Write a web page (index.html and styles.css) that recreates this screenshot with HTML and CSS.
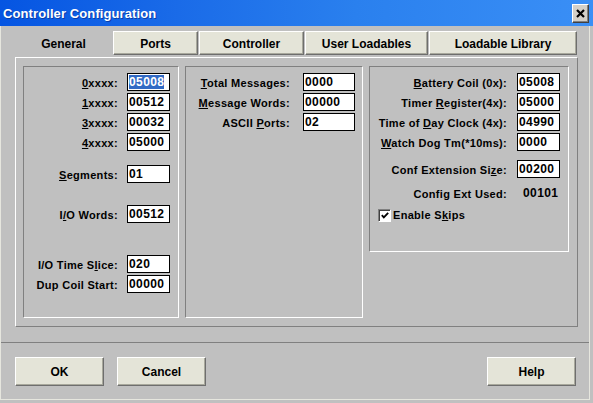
FILE: index.html
```html
<!DOCTYPE html>
<html>
<head>
<meta charset="utf-8">
<link rel="stylesheet" href="styles.css">
</head>
<body>
<div class="window">
  <div class="titlebar">
    <span class="title">Controller Configuration</span>
    <span class="close"><svg width="9" height="9" viewBox="0 0 9 9"><path d="M1 1 L8 8 M8 1 L1 8" stroke="#000" stroke-width="2.2"/></svg></span>
  </div>
  <div class="client">
    <div class="tabs">
      <div class="tab tab-active w-general">General</div>
      <div class="tab w-ports">Ports</div>
      <div class="tab w-controller">Controller</div>
      <div class="tab w-user">User Loadables</div>
      <div class="tab w-library">Loadable Library</div>
    </div>
    <div class="panel">
      <div class="group g-left">
        <div class="row"><span class="lbl"><u>0</u>xxxx:</span><span class="inp"><span class="sel">05008</span></span></div>
        <div class="row"><span class="lbl"><u>1</u>xxxx:</span><span class="inp">00512</span></div>
        <div class="row"><span class="lbl"><u>3</u>xxxx:</span><span class="inp">00032</span></div>
        <div class="row"><span class="lbl"><u>4</u>xxxx:</span><span class="inp">05000</span></div>
        <div class="row m14"><span class="lbl"><u>S</u>egments:</span><span class="inp">01</span></div>
        <div class="row m22"><span class="lbl">I<u>/</u>O Words:</span><span class="inp">00512</span></div>
        <div class="row m32"><span class="lbl">I/O Time S<u>l</u>ice:</span><span class="inp">020</span></div>
        <div class="row"><span class="lbl">Dup Coil Start:</span><span class="inp">00000</span></div>
      </div>
      <div class="group g-mid">
        <div class="row"><span class="lbl"><u>T</u>otal Messages:</span><span class="inp">0000</span></div>
        <div class="row"><span class="lbl"><u>M</u>essage Words:</span><span class="inp">00000</span></div>
        <div class="row"><span class="lbl">ASCII <u>P</u>orts:</span><span class="inp">02</span></div>
      </div>
      <div class="group g-right">
        <div class="row"><span class="lbl"><u>B</u>attery Coil (0x):</span><span class="inp">05008</span></div>
        <div class="row"><span class="lbl">Timer <u>R</u>egister(4x):</span><span class="inp">05000</span></div>
        <div class="row"><span class="lbl">Time of <u>D</u>ay Clock (4x):</span><span class="inp">04990</span></div>
        <div class="row"><span class="lbl"><u>W</u>atch Dog Tm(*10ms):</span><span class="inp">0000</span></div>
        <div class="row m9"><span class="lbl">Conf Extension Si<u>z</u>e:</span><span class="inp">00200</span></div>
        <div class="row m6"><span class="lbl">Config Ext Used:</span><span class="val">00101</span></div>
        <div class="row m4 chkrow">
          <span class="chk"><svg width="11" height="11" viewBox="0 0 11 11"><path d="M2 5 L4.2 7.5 L9 2.5" fill="none" stroke="#000" stroke-width="2"/></svg></span>
          <span class="chklbl">Enable S<u>k</u>ips</span>
        </div>
      </div>
    </div>
    <div class="sep"></div>
    <div class="buttons">
      <div class="btn">OK</div>
      <div class="btn">Cancel</div>
      <div class="spacer"></div>
      <div class="btn">Help</div>
    </div>
  </div>
</div>
</body>
</html>
```
FILE: styles.css
```css
html, body {
  margin: 0;
  padding: 0;
  background: #c0c0c0;
}
.window {
  width: 593px;
  height: 403px;
  background: #c0c0c0;
  font-family: "Liberation Sans", Arial, sans-serif;
  font-weight: bold;
  color: #000;
  display: flex;
  flex-direction: column;
  overflow: hidden;
}
.titlebar {
  height: 26px;
  flex: none;
  display: flex;
  align-items: center;
  justify-content: space-between;
  background: linear-gradient(to right, #0555e2 0%, #1a6be8 30%, #2a80ee 60%, #3a8ff6 100%);
  padding: 0 4px 0 3px;
}
.title {
  color: #fff;
  font-size: 13px;
  font-weight: bold;
  letter-spacing: 0.1px;
  text-shadow: 1px 1px 0 #0b3ea8;
}
.close {
  width: 17px;
  height: 19px;
  box-sizing: border-box;
  background: #d4d0c8;
  border: 1px solid;
  border-color: #fff #404040 #404040 #fff;
  box-shadow: inset -1px -1px #808080;
  display: flex;
  align-items: center;
  justify-content: center;
  margin-top: 1px;
}
.client {
  flex: 1;
  border-left: 1px solid #e6e6de;
  border-right: 1px solid #e6e6de;
  border-bottom: 1px solid #e6e6de;
  margin-right: 3px;
  margin-bottom: 3px;
  display: flex;
  flex-direction: column;
}
.tabs {
  display: flex;
  gap: 1px;
  margin: 5px 0 0 14px;
  height: 24px;
}
.tab {
  box-sizing: border-box;
  height: 24px;
  background: #e4e4d8;
  border: 1px solid;
  border-color: #fff #6e6e6e #6e6e6e #fff;
  box-shadow: inset -1px -1px #a8a89c;
  font-size: 12px;
  display: flex;
  align-items: center;
  justify-content: center;
  padding-top: 1px;
}
.tab-active {
  background: transparent;
  border-color: transparent;
  box-shadow: none;
}
.w-general { width: 97px; }
.w-ports { width: 85px; }
.w-controller { width: 105px; }
.w-user { width: 123px; }
.w-library { width: 148px; }

.panel {
  margin: 2px 0 0 14px;
  width: 563px;
  height: 270px;
  box-sizing: border-box;
  border: 1px solid;
  border-color: #fff #808080 #808080 #fff;
  padding: 8px 8px 8px 7px;
  display: flex;
  gap: 6px;
  align-items: stretch;
}
.group {
  box-sizing: border-box;
  border: 1px solid;
  border-color: #808080 #fff #fff #808080;
  padding-top: 6px;
  display: flex;
  flex-direction: column;
}
.g-left { width: 156px; padding-right: 8px; }
.g-mid { width: 178px; padding-right: 7px; }
.g-right { width: 200px; padding-right: 8px; height: 186px; align-self: flex-start; }

.row {
  display: flex;
  align-items: center;
  height: 18px;
  margin-top: 2px;
  font-size: 11px;
  letter-spacing: 0.3px;
}
.row:first-child { margin-top: 0; }
.m4 { margin-top: 4px; }
.m6 { margin-top: 6px; }
.m9 { margin-top: 9px; }
.m14 { margin-top: 14px; }
.m22 { margin-top: 22px; }
.m32 { margin-top: 32px; }

.lbl {
  flex: 1;
  text-align: right;
  white-space: nowrap;
  padding-top: 1px;
}
.g-left .lbl { margin-right: 9px; }
.g-mid .lbl { margin-right: 13px; }
.g-right .lbl { margin-right: 10px; }

.inp {
  box-sizing: border-box;
  width: 43px;
  height: 18px;
  border: 1px solid #000;
  background: #fff;
  font-size: 12px;
  letter-spacing: 0.4px;
  line-height: 16px;
  padding-left: 1px;
  white-space: nowrap;
  overflow: hidden;
}
.g-mid .inp { width: 52px; }
.sel {
  background: #316ac5;
  color: #fff;
}
.val {
  width: 43px;
  box-sizing: border-box;
  padding-left: 6px;
  font-size: 12px;
  letter-spacing: 0.4px;
}
.chkrow { justify-content: flex-start; padding-left: 8px; }
.chk {
  width: 13px;
  height: 13px;
  box-sizing: border-box;
  background: #fff;
  border: 1px solid;
  border-color: #808080 #fff #fff #808080;
  box-shadow: inset 1px 1px #404040;
  display: flex;
  align-items: center;
  justify-content: center;
  padding: 1px 0 0 1px;
}
.chklbl {
  margin-left: 2px;
  font-size: 11px;
}

.sep {
  height: 1px;
  background: #808080;
  margin-top: 15px;
}
.buttons {
  display: flex;
  gap: 13px;
  margin: 14px 0 0 14px;
  width: 561px;
}
.spacer { flex: 1; }
.btn {
  box-sizing: border-box;
  width: 89px;
  height: 29px;
  background: #e4e4d8;
  border: 1px solid;
  border-color: #fff #6e6e6e #6e6e6e #fff;
  box-shadow: inset -1px -1px #a8a89c;
  font-size: 12px;
  display: flex;
  align-items: center;
  justify-content: center;
}
```
